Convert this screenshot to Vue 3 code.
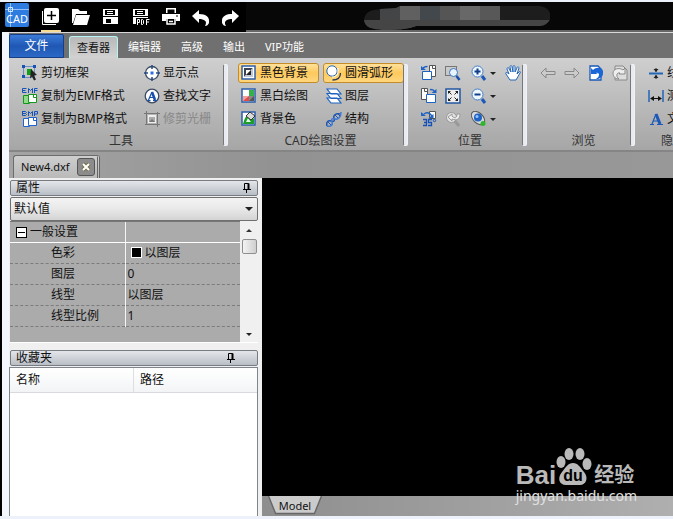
<script setup>
import { ref } from 'vue';

const quickActions = [
  { id: 'new', label: '新建' },
  { id: 'open', label: '打开' },
  { id: 'save', label: '保存' },
  { id: 'pdf', label: '另存为PDF' },
  { id: 'print', label: '打印' },
  { id: 'undo', label: '撤销' },
  { id: 'redo', label: '重做' },
];

const tabs = ['查看器', '编辑器', '高级', '输出', 'VIP功能'];
const activeTab = ref('查看器');

// listed row by row
const groups = [
  {
    id: 'tools',
    title: '工具',
    items: [
      { icon: 'crop', text: '剪切框架' },
      { icon: 'point', text: '显示点' },
      { icon: 'emf', text: '复制为EMF格式' },
      { icon: 'find', text: '查找文字' },
      { icon: 'bmp', text: '复制为BMP格式' },
      { icon: 'raster', text: '修剪光栅', disabled: true },
    ],
  },
  {
    id: 'drawing',
    title: 'CAD绘图设置',
    items: [
      { icon: 'blackbg', text: '黑色背景', on: true },
      { icon: 'arc', text: '圆滑弧形', on: true },
      { icon: 'bw', text: '黑白绘图' },
      { icon: 'layers', text: '图层' },
      { icon: 'bgcolor', text: '背景色' },
      { icon: 'structure', text: '结构' },
    ],
  },
  {
    id: 'position',
    title: '位置',
    items: [
      { icon: 'rotl' },
      { icon: 'zoomwin' },
      { icon: 'zoomin', arrow: true },
      { icon: 'hand' },
      { icon: 'rotr' },
      { icon: 'fit' },
      { icon: 'zoomout', arrow: true },
      { icon: '' },
      { icon: 'rot35' },
      { icon: 'zoomprev' },
      { icon: 'orbit', arrow: true },
    ],
  },
  {
    id: 'browse',
    title: '浏览',
    items: [
      { icon: 'back', disabled: true },
      { icon: 'forward', disabled: true },
      { icon: 'viewundo' },
      { icon: 'viewredo', disabled: true },
    ],
  },
  {
    id: 'hide',
    title: '隐藏',
    items: [
      { icon: 'linew', text: '线宽' },
      { icon: 'measure', text: '测量' },
      { icon: 'text', text: '文本' },
    ],
  },
];

const properties = [
  { name: '色彩', value: '以图层', swatch: true },
  { name: '图层', value: '0' },
  { name: '线型', value: '以图层' },
  { name: '线型比例', value: '1' },
];

const expanded = ref(true);
</script>

<template>
  <svg class="defs" aria-hidden="true">
    <symbol id="q-new" viewBox="0 0 18 18">
      <path d="M.5 3v13.500H14" fill="none" stroke="#fff" />
      <rect x="2" y="0" width="15" height="15" rx="2" fill="#fff" />
      <path d="M9.500 3v9M5 7.500h9" stroke="#000" stroke-width="1.500" />
    </symbol>
    <symbol id="q-open" viewBox="0 0 18 18">
      <path d="M0 1h6l2 2h7v3H4L1 15H0z" fill="#fff" />
      <path d="M4 7h14l-3 10H1z" fill="#fff" />
    </symbol>
    <symbol id="q-save" viewBox="0 0 18 18">
      <path d="M1 1h15v7H1zM1 9h15v7H1z" fill="#fff" />
      <path d="M3 2h10v5H3zM4 11h8v4H4z" fill="#000" />
      <path d="M5 3.500h6M5 5.500h6" stroke="#fff" />
      <path d="M9 11h3v4H9z" fill="#fff" />
    </symbol>
    <symbol id="q-pdf" viewBox="0 0 18 18">
      <path d="M1 1h15v7H1zM1 9h15v7H1z" fill="#fff" />
      <path d="M3 2h10v5H3zM4 10h14v8H4z" fill="#000" />
      <path d="M5 3.500h6M5 5.500h6" stroke="#fff" />
      <path d="M5.500 17v-5.500h2v3h-2M9.500 11.500h1l1 1v3l-1 1h-1zM14.500 17v-5.500h3M14.500 14h2.500" fill="none" stroke="#fff" />
    </symbol>
    <symbol id="q-print" viewBox="0 0 18 18">
      <path d="M4 0h10v5H4zM0 6h18v7h-4v-2H4v2H0z" fill="#fff" />
      <path d="M5.500 1.500h7V5h-7z" fill="#000" />
      <path d="M5 11v5h8v-5M7 13.500h4" fill="none" stroke="#fff" stroke-width="1.500" />
      <path d="M14 8h2" stroke="#000" />
    </symbol>
    <symbol id="q-undo" viewBox="0 0 18 18">
      <path d="M0 8l7-6v4c7 0 11 3 10 9-1 2-2 3-4 3 3-5-1-7-6-7v4z" fill="#fff" />
    </symbol>
    <symbol id="q-redo" viewBox="0 0 18 18">
      <path d="M17 8l-7-6v4C3 6-1 9 0 15c1 2 2 3 4 3-3-5 1-7 6-7v4z" fill="#fff" />
    </symbol>

    <symbol id="i-crop" viewBox="0 0 16 16">
      <path d="M1.500 1.500h11v11h-11z" fill="none" stroke="#1552b8" stroke-dasharray="1 1" />
      <path d="M0 0h3v3H0zM11 0h3v3h-3zM0 10h3v3H0z" fill="#1552b8" />
      <path d="M5 4h5v6H5z" fill="#12a01c" />
      <path d="M9 4l6 6-3 .5 2 4-2 1-2-4-2 2z" fill="#222" />
    </symbol>
    <symbol id="i-point" viewBox="0 0 16 16">
      <circle cx="8" cy="8" r="6.500" fill="#fff" stroke="#3b4b63" stroke-width="1.300" />
      <path d="M8 0v4M8 12v4M0 8h4M12 8h4" stroke="#244a86" stroke-width="1.500" />
      <path d="M6.500 6.500h3v3h-3z" fill="#2a6ee0" />
    </symbol>
    <symbol id="i-find" viewBox="0 0 16 16">
      <circle cx="8" cy="8" r="6.800" fill="#fff" stroke="#3b4b63" stroke-width="1.300" />
      <path d="M4.500 12L8 4" fill="none" stroke="#174fae" stroke-width="1.200" />
      <path d="M8 4l3 8" fill="none" stroke="#174fae" stroke-width="2.500" />
      <path d="M5.500 9.500h5M3.500 12.500h3M9 12.500h4" stroke="#174fae" />
    </symbol>
    <symbol id="i-emf" viewBox="0 0 16 16">
      <path d="M4.500 .5h-4v4h4M.5 2.500h3M6.500 5V.5l2 2 2-2V5M15.500.5h-3V5M12.500 2.500h3" fill="none" stroke="#1552b8" />
      <path d="M1.500 7.500h6v8h-6z" fill="#8fdc88" stroke="#14961d" />
      <path d="M6.500 6.500h8v8h-8z" fill="#fff" stroke="#14961d" />
      <path d="M11.500 6.500v3h3" fill="none" stroke="#14961d" />
    </symbol>
    <symbol id="i-bmp" viewBox="0 0 16 16">
      <path d="M.5 0v4.500h3l1-1-1-1h-3M.5.500h3l1 1-1 1M6.500 5V.5l2 2 2-2V5M12.500 5V.5h3v2.500h-3" fill="none" stroke="#1552b8" />
      <path d="M1.500 7.500h6v8h-6z" fill="#fff" stroke="#1e63d0" />
      <path d="M6.500 6.500h8v8h-8z" fill="#fff" stroke="#1e63d0" />
      <path d="M11.500 6.500v3h3" fill="none" stroke="#1e63d0" />
    </symbol>
    <symbol id="i-raster" viewBox="0 0 16 16">
      <path d="M2.500 0v14M0 2.500h16M13.500 1v15M1 13.500h15" stroke="#777" />
      <path d="M4 4h8v8H4z" fill="#eee" />
      <path d="M5 6h6v5H5z" fill="#aaa" />
      <path d="M5 11l3-3 3 3z" fill="#777" />
    </symbol>

    <symbol id="i-blackbg" viewBox="0 0 16 16">
      <path d="M1 1h13v13H1z" fill="#fff" stroke="#2d5fae" stroke-width="1.500" />
      <path d="M3 12V3h9z" fill="#3a424f" />
      <path d="M3 12h9V3z" fill="#bfc8d6" />
      <path d="M5 10V5h5z" fill="#fff" />
      <path d="M5 10h5V5z" fill="#222" />
    </symbol>
    <symbol id="i-arc" viewBox="0 0 16 16">
      <circle cx="6" cy="6" r="5.200" fill="#fff" stroke="#2366b7" />
      <path d="M12 3v3c0 4-2 6-6 6" fill="none" stroke="#fff" />
      <path d="M14.500 8c0 5-3 7-8 7" fill="none" stroke="#26395a" stroke-width="1.300" />
    </symbol>
    <symbol id="i-bw" viewBox="0 0 16 16">
      <path d="M1 1h13v13H1z" fill="#fff" stroke="#2d5fae" stroke-width="1.500" />
      <path d="M8 2h5v6H8z" fill="#36b049" />
      <path d="M2 8h6v5H2z" fill="#e24c45" />
      <path d="M8 8h5v5H8z" fill="#555" />
      <path d="M8 8h5l-5 5z" fill="#888" />
      <path d="M2 8h6l-6 5z" fill="#f4a09b" />
    </symbol>
    <symbol id="i-layers" viewBox="0 0 16 16">
      <path d="M1 10h10l4 5H5zM1 5.500h10l4 5H5zM1 1h10l4 5H5z" fill="#fff" stroke="#1e63c4" stroke-width="1.200" />
    </symbol>
    <symbol id="i-bgcolor" viewBox="0 0 16 16">
      <path d="M1 1h13v13H1z" fill="#fff" stroke="#2d5fae" stroke-width="1.500" />
      <path d="M2 13c1-4 2-7 4-8 3-1 5 1 7 3v5z" fill="#1a9d2a" />
      <path d="M5 11l2-4 3 4z" fill="#e6ffe6" />
      <path d="M5 5l4-4 5 4-4 4z" fill="#ddd" stroke="#333" />
    </symbol>
    <symbol id="i-structure" viewBox="0 0 16 16">
      <path d="M1 15c-1-4 1-6 4-5s4 0 3-3 2-5 6-4" fill="none" stroke="#1e55b0" stroke-width="1.500" />
      <path d="M1 15c4 1 6-1 5-4s0-4 3-3 6-2 6-7" fill="none" stroke="#3c78d4" stroke-width="1.500" />
      <path d="M2 11l3 3M9 4l3 3M11 2l3 3" stroke="#1e55b0" />
    </symbol>

    <symbol id="i-rotl" viewBox="0 0 16 16">
      <path d="M8.500.500h6v11h-6z" fill="#fff" stroke="#555" />
      <path d="M11.500.500v3h3" fill="none" stroke="#555" />
      <path d="M1.500 6.500h9v8h-9z" fill="#fff" stroke="#1e63c4" />
      <path d="M6.500 1.500c-2 0-4 0-4 2" fill="none" stroke="#1e63c4" stroke-width="1.500" />
      <path d="M0 1v4h5z" fill="#1e63c4" />
    </symbol>
    <symbol id="i-rotr" viewBox="0 0 16 16">
      <path d="M.5.500h6v11h-6z" fill="#fff" stroke="#555" />
      <path d="M3.500.500v3h3" fill="none" stroke="#555" />
      <path d="M5.500 6.500h9v8h-9z" fill="#fff" stroke="#1e63c4" />
      <path d="M9 1.500c2 0 4 0 4 2" fill="none" stroke="#1e63c4" stroke-width="1.500" />
      <path d="M15.500 1v4h-5z" fill="#1e63c4" />
    </symbol>
    <symbol id="i-rot35" viewBox="0 0 16 16">
      <path d="M8.500.500h6v7h-6z" fill="#fff" stroke="#555" />
      <path d="M3 3c2-2 5-2 8 2" fill="none" stroke="#1e63c4" stroke-width="1.500" />
      <path d="M0 1v4h5zM12.500 3v4h-5z" fill="#1e63c4" />
      <path d="M2 8.500h3.500v6H2M3 11.500h2.500M11 8.500H7.500v3h3v3H7" fill="none" stroke="#1552b8" stroke-width="1.300" />
      <circle cx="13.500" cy="9.500" r="1.200" fill="none" stroke="#1552b8" />
    </symbol>
    <symbol id="i-zoomwin" viewBox="0 0 16 16">
      <path d="M.5 1.500h11v9H.5z" fill="none" stroke="#222" stroke-dasharray="1 1" />
      <circle cx="8.500" cy="7.500" r="4" fill="#e8f4ff" stroke="#3a74bf" />
      <path d="M11.500 11l3 4" stroke="#174fae" stroke-width="2.500" />
    </symbol>
    <symbol id="i-fit" viewBox="0 0 16 16">
      <path d="M1 1h14v14H1z" fill="#eee" stroke="#2458a0" stroke-width="1.500" />
      <path d="M3 3h3L3 6zM13 3h-3l3 3zM3 13h3l-3-3zM13 13h-3l3-3z" fill="#222" />
      <path d="M4 4l2.500 2.500M12 4L9.500 6.500M4 12l2.500-2.500M12 12L9.500 9.500" stroke="#222" />
    </symbol>
    <symbol id="i-zoomprev" viewBox="0 0 16 16">
      <circle cx="6.500" cy="6.500" r="5" fill="#e2e2e2" stroke="#999" />
      <path d="M10 10l4 5" stroke="#999" stroke-width="3" />
      <path d="M3 6l4-3v2c3 3 5 2 5-2h3c0 5-3 7-8 5v2z" fill="#eee" stroke="#999" />
    </symbol>
    <symbol id="i-zoomin" viewBox="0 0 16 16">
      <circle cx="6.500" cy="6.500" r="5.500" fill="#eef7ff" stroke="#447fc8" />
      <path d="M3.500 6.500h6M6.500 3.500v6" stroke="#123e88" stroke-width="2" />
      <path d="M11 11l3 4" stroke="#1b58b9" stroke-width="3" />
    </symbol>
    <symbol id="i-zoomout" viewBox="0 0 16 16">
      <circle cx="6.500" cy="6.500" r="5.500" fill="#eef7ff" stroke="#447fc8" />
      <path d="M3.500 6.500h6" stroke="#123e88" stroke-width="2" />
      <path d="M11 11l3 4" stroke="#1b58b9" stroke-width="3" />
    </symbol>
    <symbol id="i-orbit" viewBox="0 0 16 16">
      <ellipse cx="7" cy="7" rx="8" ry="5" transform="rotate(45 7 7)" fill="#d5d8dc" stroke="#555" />
      <circle cx="7" cy="6.500" r="4" fill="#1e63c4" />
      <circle cx="6" cy="5.500" r="1.500" fill="#90c8ff" />
      <circle cx="12" cy="12.500" r="2.500" fill="#2eb82e" />
    </symbol>
    <symbol id="i-hand" viewBox="0 0 16 16">
      <path d="M5 15L1 9c-1-2 1-2 3 0L2 4c0-2 2-2 2 0l2 3-1-5c0-2 2-2 2 0l1 5V2c0-2 2-2 2 0v5l2-4c0-2 2-1 2 0l-2 6 2-2c1-1 2 0 1 1l-4 7z" fill="#fff" stroke="#2366b7" />
    </symbol>
    <symbol id="i-back" viewBox="0 0 16 16">
      <path d="M1 8l5-5v3.500h9v3H6V13z" fill="#ccc" stroke="#888" />
    </symbol>
    <symbol id="i-forward" viewBox="0 0 16 16">
      <path d="M15 8l-5-5v3.500H1v3h9V13z" fill="#ccc" stroke="#888" />
    </symbol>
    <symbol id="i-viewundo" viewBox="0 0 16 16">
      <path d="M2 1h8l3 3v11H2z" fill="#fff" stroke="#1b58b9" stroke-width="1.300" />
      <path d="M3 9V3l2 2c4-4 11-2 10 3 0 4-3 6-7 6 4-2 4-7 0-6l2 1z" fill="#1a66d6" />
    </symbol>
    <symbol id="i-viewredo" viewBox="0 0 16 16">
      <path d="M3 1h8l4 4v10H3z" fill="#ddd" stroke="#888" />
      <path d="M13 9V3l-2 2C7 2 1 4 1 8c0 4 3 6 6 6-3-2-3-7 1-6l-1 1z" fill="#eee" stroke="#888" />
    </symbol>
    <symbol id="i-linew" viewBox="0 0 16 16">
      <path d="M1 8.500h14" stroke="#2366b7" stroke-width="2" />
      <path d="M8 3v4M8 14v-4" stroke="#222" />
      <path d="M5.500 4h5L8 7zM5.500 13h5L8 10z" fill="#222" />
    </symbol>
    <symbol id="i-measure" viewBox="0 0 16 16">
      <path d="M1 2v12M15 2v12" stroke="#2366b7" stroke-width="1.500" />
      <path d="M3 10.500h10" stroke="#111" />
      <path d="M6 8v5l-4-2.500zM10 8v5l4-2.500z" fill="#111" />
    </symbol>
    <symbol id="i-text" viewBox="0 0 16 16">
      <path d="M4 13L8 3" stroke="#1b58b9" stroke-width="1.200" />
      <path d="M8 3l4 10" stroke="#1b58b9" stroke-width="3" />
      <path d="M5 10h6M2 13.500h4M9 13.500h6" stroke="#1b58b9" />
    </symbol>
    <symbol id="pin" viewBox="0 0 10 10">
      <path d="M2.500 6V.500h4V6" fill="none" stroke="#000" />
      <path d="M6.500.500V6" stroke="#000" stroke-width="2" />
      <path d="M1 6.500h8M4.500 6v4" stroke="#000" />
    </symbol>
  </svg>

  <div class="window">
    <header class="titlebar">
      <svg class="logo" viewBox="0 0 24 24">
        <rect width="24" height="24" rx="2" fill="#2f7ce0" />
        <path d="M0 6.500h24M5.500 0v24" stroke="#8fc0fa" />
        <path d="M3.500 4.500h4v4h-4z" fill="none" stroke="#d5e9ff" />
        <text x="12" y="20" text-anchor="middle">CAD</text>
      </svg>
      <nav class="quick">
        <button v-for="a in quickActions" :key="a.id" type="button" :aria-label="a.label">
          <svg><use :href="'#q-' + a.id" /></svg>
        </button>
      </nav>
      <div class="caption">
        <svg class="smudge" viewBox="0 0 186 24">
          <clipPath id="blob">
            <path d="M0 14C1 5 8 4 16 3l16-1 4-2h140c14 2 14 18 0 20H52c-8 3-20 4-32 4C8 23 1 22 0 14z" />
          </clipPath>
          <g clip-path="url(#blob)">
            <path d="M0 0h186v24H0z" fill="#1d1d1d" />
            <path d="M16 0h20v24H16z" fill="#444547" />
            <path d="M36 0h20v24H36z" fill="#606060" />
            <path d="M56 0h20v24H56z" fill="#42484c" />
            <path d="M76 0h20v24H76z" fill="#555" />
            <path d="M96 0h20v24H96z" fill="#686868" />
            <path d="M116 0h20v24h-20z" fill="#585858" />
            <path d="M0 14h186v10H0z" fill="#454545" />
          </g>
        </svg>
      </div>
    </header>

    <div class="frame">
      <div class="ribbon-tabs">
        <button type="button" class="file">文件</button>
        <button
          v-for="t in tabs"
          :key="t"
          type="button"
          class="tab"
          :class="{ active: t === activeTab }"
          @click="activeTab = t"
        >
          {{ t }}
        </button>
      </div>

      <div class="ribbon">
        <section v-for="g in groups" :key="g.id" class="group" :class="g.id">
          <div class="items">
            <button
              v-for="(item, i) in g.items"
              :key="i"
              type="button"
              class="tool"
              :class="{ on: item.on, blank: !item.icon }"
              :disabled="item.disabled"
            >
              <svg><use :href="'#i-' + item.icon" /></svg>
              <span v-if="item.text">{{ item.text }}</span>
              <i v-if="item.arrow" class="caret"></i>
            </button>
          </div>
          <h2>{{ g.title }}</h2>
        </section>
      </div>

      <div class="doc-tabs">
        <div class="doc-tab">
          <span>New4.dxf</span>
          <button type="button" aria-label="关闭">
            <svg viewBox="0 0 10 10">
              <path d="M2 2l6 6M8 2L2 8" stroke="#77704a" stroke-width="4" />
              <path d="M2 2l6 6M8 2L2 8" stroke="#fff" stroke-width="2" />
            </svg>
          </button>
        </div>
      </div>

      <div class="workspace">
        <aside class="side">
          <section class="panel">
            <div class="panel-title">
              <span>属性</span>
              <svg><use href="#pin" /></svg>
            </div>
            <div class="combo">
              <select aria-label="属性">
                <option>默认值</option>
              </select>
              <i class="caret"></i>
            </div>
            <div class="grid-box">
              <div class="grid-rows">
                <table>
                  <thead>
                    <tr>
                      <th>
                        <button type="button" aria-label="折叠" @click="expanded = !expanded"></button>
                        一般设置
                      </th>
                      <th></th>
                    </tr>
                  </thead>
                  <tbody v-if="expanded">
                    <tr v-for="p in properties" :key="p.name">
                      <td>{{ p.name }}</td>
                      <td><i v-if="p.swatch" class="swatch"></i>{{ p.value }}</td>
                    </tr>
                  </tbody>
                </table>
              </div>
              <div class="scroll">
                <i class="caret up"></i>
                <div class="thumb"></div>
                <i class="caret"></i>
              </div>
            </div>
          </section>

          <section class="panel favorites">
            <div class="panel-title">
              <span>收藏夹</span>
              <svg><use href="#pin" /></svg>
            </div>
            <div class="list">
              <table>
                <thead>
                  <tr>
                    <th>名称</th>
                    <th>路径</th>
                  </tr>
                </thead>
              </table>
            </div>
          </section>
        </aside>

        <main class="drawing-area">
          <div class="canvas"></div>
          <div class="sheets">
            <button type="button" class="sheet">
              <svg viewBox="0 0 54 19">
                <path d="M0 0h54l-7 17.500H7z" fill="#cbcbcb" />
                <path d="M.5 0l7 17.500h39l7-17.500" fill="none" stroke="#666" stroke-width="1.500" />
              </svg>
              <span>Model</span>
            </button>
          </div>
          <div class="watermark">
            <div class="brand">
              <span class="bai">Bai</span>
              <svg viewBox="0 0 36 40">
                <g fill="#b9b9b9">
                  <ellipse cx="5" cy="15" rx="4.500" ry="6" />
                  <ellipse cx="13" cy="7" rx="4.500" ry="6" />
                  <ellipse cx="24" cy="7" rx="4.500" ry="6" />
                  <ellipse cx="31" cy="17" rx="4.500" ry="6" />
                  <path d="M17 16c5 0 7 4 11 9 5 6 2 13-4 13H10c-7 0-9-7-4-13 4-5 6-9 11-9z" />
                </g>
                <text x="17" y="34" text-anchor="middle">du</text>
              </svg>
              <span class="exp">经验</span>
            </div>
            <div class="url">jingyan.baidu.com</div>
          </div>
        </main>
      </div>
    </div>
  </div>
</template>

<style>
body {
  margin: 0;
}
</style>

<style scoped>
.window {
  display: flex;
  flex-direction: column;
  height: 100vh;
  box-sizing: border-box;
  border-top: 2px solid #eaf1fb;
  border-bottom: 3px solid #edf2fa;
  background: #000;
  overflow: hidden;
  font: 12px/16px "Noto Sans", "Noto Sans CJK SC", sans-serif;
  color: #111;
}

.window * {
  box-sizing: border-box;
}

.defs {
  position: absolute;
  width: 0;
  height: 0;
}

button {
  margin: 0;
  padding: 0;
  border: 0;
  background: none;
  font: inherit;
  color: inherit;
}

.titlebar {
  display: flex;
  align-items: stretch;
  flex: none;
  height: 30px;
  padding-left: 5px;
}

.logo {
  width: 24px;
  height: 24px;
  margin-top: 1px;
}

.logo text {
  font: 11px "Noto Sans", sans-serif;
  fill: #fff;
}

.quick {
  display: flex;
  margin-left: 7px;
}

.quick button {
  display: flex;
  align-items: center;
  justify-content: center;
  width: 30px;
}

/* the first action is the highlighted one */
.quick button:first-child {
  background: linear-gradient(#f6dc92, #f6dc92) center bottom / 20px 2px no-repeat;
}

.quick svg {
  width: 18px;
  height: 18px;
}

.caption {
  flex: 1;
  padding: 4px 0 0 118px;
  border-bottom: 2px solid #666;
  background: #070707;
}

.smudge {
  display: block;
  width: 186px;
  height: 24px;
}

.frame {
  display: flex;
  flex-direction: column;
  flex: 1;
  min-height: 0;
  margin-left: 2px;
  padding-left: 7px;
  background: #f3f6fd;
}

.ribbon-tabs {
  display: flex;
  flex: none;
  align-items: flex-end;
  height: 26px;
  border-top: 1px solid #d8d8d8;
  background: #707070;
  color: #fff;
}

.file {
  width: 55px;
  height: 24px;
  margin-right: 5px;
  border: 1px solid #173f86;
  border-radius: 2px 2px 0 0;
  background: linear-gradient(#3b7bd8, #1f58b4 50%, #2c68c6);
}

.tab {
  height: 22px;
  padding: 0 10px;
  font-size: 11px;
}

.tab.active {
  padding: 0 7px;
  border: 1px solid #b5f4f4;
  border-bottom: 0;
  border-radius: 3px 3px 0 0;
  background: linear-gradient(#b8b8b8, #d2d2d2);
  color: #111;
}

.ribbon {
  display: flex;
  flex: none;
  height: 94px;
  overflow: hidden;
  border-bottom: 2px solid #858585;
  background: linear-gradient(#cfcfcf, #b4b4b4 65%, #a6a6a6);
}

.group {
  position: relative;
  flex: none;
  padding: 5px 0 0 10px;
}

.group::after {
  content: "";
  position: absolute;
  top: 6px;
  right: 0;
  bottom: 4px;
  width: 3px;
  border: 1px solid #f0f2f6;
  border-left-color: #777;
  border-radius: 2px;
  background: #e8ebf2;
}

.items {
  display: grid;
  grid-auto-rows: 20px;
  gap: 3px 4px;
  height: 66px;
}

.group h2 {
  margin: 2px 0 0;
  padding-right: 5px;
  font-size: 12px;
  line-height: 20px;
  font-weight: normal;
  text-align: center;
  color: #333;
}

.tools {
  width: 219px;
}

.tools .items {
  grid-template-columns: 118px 80px;
}

.drawing {
  width: 180px;
}

.drawing .items {
  grid-template-columns: 81px 81px;
}

.position {
  width: 119px;
}

.position .items {
  grid-template-columns: 20px 22px 30px 20px;
}

.browse {
  width: 108px;
}

.browse .items {
  grid-template-columns: repeat(4, 20px);
}

.hide {
  width: 90px;
}

.hide h2 {
  padding-left: 16px;
  text-align: left;
}

.tool {
  display: flex;
  align-items: center;
  gap: 3px;
  padding: 0 2px;
  border: 1px solid transparent;
  border-radius: 3px;
  white-space: nowrap;
}

.tool svg {
  flex: none;
  width: 16px;
  height: 16px;
}

.tool.on {
  border-color: #c38c28;
  background: linear-gradient(#ffe19c, #ffc95c 50%, #ffd67e);
}

.tool.blank {
  visibility: hidden;
}

.tool:disabled {
  color: #888;
}

.caret {
  flex: none;
  border: 3px solid transparent;
  border-top-color: #222;
  border-bottom-width: 0;
}

.caret.up {
  border-top-width: 0;
  border-bottom: 3px solid #333;
}

.doc-tabs {
  display: flex;
  flex: none;
  align-items: flex-end;
  height: 26px;
  padding-left: 4px;
  background: linear-gradient(90deg, #a4a4a4, #929292 40%, #989898);
}

.doc-tab {
  display: flex;
  align-items: center;
  gap: 7px;
  height: 23px;
  padding: 0 2px 0 7px;
  border: 1px solid #6c6c6c;
  border-right: 3px double #666;
  border-bottom: 0;
  border-radius: 3px 3px 0 0;
  background: linear-gradient(#cecece, #b9b9b9);
  font-size: 11px;
}

.doc-tab button {
  display: flex;
  align-items: center;
  justify-content: center;
  width: 18px;
  height: 18px;
  border: 1px solid #555;
  border-radius: 3px;
  background: #8c8c8c;
}

.doc-tab svg {
  width: 10px;
  height: 10px;
}

.workspace {
  display: flex;
  flex: 1;
  min-height: 0;
}

.side {
  display: flex;
  flex-direction: column;
  flex: none;
  width: 253px;
  padding: 2px 4px 0 0;
  background: #f0f0f0;
}

.panel-title {
  display: flex;
  align-items: center;
  justify-content: space-between;
  height: 16px;
  margin-left: 1px;
  padding: 0 5px;
  border: 1px solid #777b82;
  border-radius: 2px;
  background: linear-gradient(#e4e6ea, #b9bec6);
}

.panel-title svg {
  width: 10px;
  height: 10px;
}

.favorites .panel-title {
  padding-right: 21px;
}

.combo {
  position: relative;
  height: 24px;
  margin: 1px 0 0 1px;
}

.combo select {
  width: 100%;
  height: 24px;
  padding: 0 3px;
  border: 1px solid #707070;
  border-radius: 2px;
  background: linear-gradient(#f4f4f4, #e8e8e8 50%, #d4d4d4);
  font: inherit;
  color: #111;
  appearance: none;
}

.combo .caret {
  position: absolute;
  top: 10px;
  right: 5px;
  border-width: 4px 4px 0;
}

.grid-box {
  display: flex;
  height: 122px;
  margin-left: 1px;
  border-bottom: 1px solid #fff;
  background: #ababab;
}

.grid-rows {
  flex: 1;
}

.grid-box table {
  width: 100%;
  border-collapse: collapse;
  table-layout: fixed;
}

.grid-box tr {
  height: 21px;
}

.grid-box th,
.grid-box td {
  padding: 0;
  font-weight: normal;
  text-align: left;
  white-space: nowrap;
}

.grid-box th {
  padding-left: 6px;
  border-top: 1px solid #777;
  border-bottom: 1px solid #fff;
}

.grid-box td {
  border-bottom: 1px dashed #7c7c7c;
}

.grid-box td:first-child {
  padding-left: 41px;
}

.grid-box th + th,
.grid-box td + td {
  padding-left: 2px;
  border-left: 1px solid #f4f4f4;
}

.grid-box th button {
  position: relative;
  width: 11px;
  height: 11px;
  border: 1px solid #000;
  background: #fff;
  vertical-align: -1px;
}

.grid-box th button::after {
  content: "";
  position: absolute;
  inset: 4px 1px;
  background: #000;
}

.swatch {
  display: inline-block;
  width: 11px;
  height: 11px;
  margin: 0 3px;
  border: 1px solid #fff;
  background: #000;
  vertical-align: -1px;
}

.scroll {
  display: flex;
  flex-direction: column;
  align-items: center;
  width: 18px;
  padding: 8px 0 6px;
  background: #f0f0f0;
}

.thumb {
  width: 15px;
  height: 15px;
  margin: 7px 0 auto;
  border: 1px solid #8f8f8f;
  border-radius: 2px;
  background: linear-gradient(90deg, #f3f3f3, #cfcfcf);
}

.favorites {
  display: flex;
  flex-direction: column;
  flex: 1;
  padding-top: 7px;
}

.list {
  flex: 1;
  margin-top: 1px;
  border: 1px solid #80858d;
  border-bottom: 0;
  background: #fff;
}

.list table {
  width: 100%;
  border-collapse: collapse;
  table-layout: fixed;
}

.list th {
  height: 24px;
  padding: 0 6px;
  border-bottom: 1px solid #d8dade;
  background: linear-gradient(#fff, #f3f4f6);
  font-weight: normal;
  text-align: left;
}

.list th + th {
  border-left: 1px solid #dedfe1;
}

.drawing-area {
  position: relative;
  display: flex;
  flex: 1;
  flex-direction: column;
}

.canvas {
  flex: 1;
  background: #000;
}

.sheets {
  height: 20px;
  padding-left: 6px;
  background: linear-gradient(90deg, #8e8e8e, #afafaf);
}

.sheet {
  display: grid;
  place-items: center;
  font-size: 11px;
}

.sheet svg,
.sheet span {
  grid-area: 1 / 1;
}

.sheet svg {
  width: 54px;
  height: 19px;
}

.watermark {
  position: absolute;
  right: 36px;
  bottom: 11px;
  color: #b9b9b9;
}

.brand {
  display: flex;
  align-items: flex-end;
  height: 40px;
}

.brand svg {
  width: 36px;
  height: 40px;
}

.brand svg text {
  font: bold 16px "Liberation Sans", sans-serif;
  fill: #000;
}

.bai {
  font: bold 26px/24px "Liberation Sans", sans-serif;
}

.exp {
  margin-left: 2px;
  font-size: 20px;
  line-height: 24px;
  font-weight: bold;
}

.url {
  font-size: 14px;
  line-height: 18px;
  color: #e0e0e0;
}
</style>
